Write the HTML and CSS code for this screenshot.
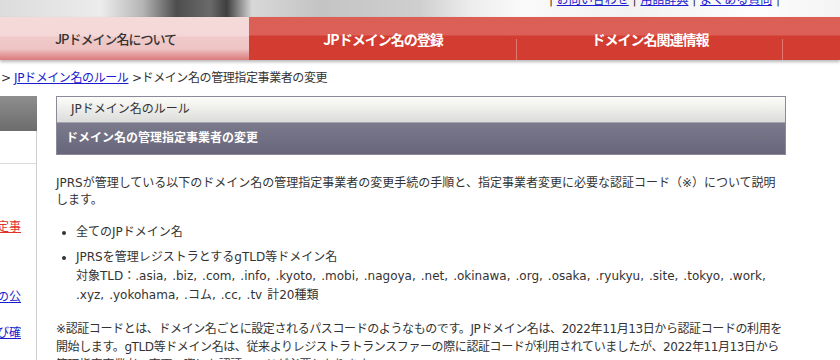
FILE: index.html
```html
<!DOCTYPE html>
<html lang="ja">
<head>
    <meta charset="utf-8">
    <title>ドメイン名の管理指定事業者の変更</title>
    <link rel="stylesheet" href="styles.css">
</head>
<body>
    <div class="header">
        <div class="util-links">
            | <a href="#">お問い合わせ</a> | <a href="#">用語辞典</a> | <a href="#">よくある質問</a> |
        </div>
    </div>

    <ul class="gnav">
        <li class="gnav-item current">JPドメイン名について</li>
        <li class="gnav-item">JPドメイン名の登録</li>
        <li class="gnav-item">ドメイン名関連情報</li>
        <li class="gnav-rest"></li>
    </ul>

    <div class="breadcrumb">&gt; <a href="#">JPドメイン名のルール</a> &gt;ドメイン名の管理指定事業者の変更</div>

    <div class="wrap">
        <div class="side">
            <div class="side-head"></div>
            <div class="side-body">
                <div class="side-top"></div>
                <ul class="side-menu">
                    <li class="active"><a href="#">定事</a></li>
                    <li><a href="#">の公</a></li>
                    <li><a href="#">び確</a></li>
                </ul>
            </div>
        </div>

        <div class="main">
            <div class="page-title">
                <div class="title-sub">JPドメイン名のルール</div>
                <h1 class="title-main">ドメイン名の管理指定事業者の変更</h1>
            </div>

            <p class="lead">JPRSが管理している以下のドメイン名の管理指定事業者の変更手続の手順と、指定事業者変更に必要な認証コード（※）について説明します。</p>

            <ul class="tld-list">
                <li>全てのJPドメイン名</li>
                <li>JPRSを管理レジストラとするgTLD等ドメイン名<br>
                    <span class="tld-names">対象TLD：.asia, .biz, .com, .info, .kyoto, .mobi, .nagoya, .net, .okinawa, .org, .osaka, .ryukyu, .site, .tokyo, .work,<br>
                    .xyz, .yokohama, .コム, .cc, .tv 計20種類</span></li>
            </ul>

            <p class="note">※認証コードとは、ドメイン名ごとに設定されるパスコードのようなものです。JPドメイン名は、2022年11月13日から認証コードの利用を<br>
                開始します。gTLD等ドメイン名は、従来よりレジストラトランスファーの際に認証コードが利用されていましたが、2022年11月13日から<br>
                管理指定事業者の変更の際にも認証コードが必要となります。</p>
        </div>
    </div>
</body>
</html>
```

FILE: styles.css
```css
* {
    margin: 0;
    padding: 0;
    box-sizing: border-box;
}

html, body {
    width: 100%;
    height: 100%;
    overflow: hidden;
}

body {
    font-family: "DejaVu Sans", "Noto Sans CJK JP", sans-serif;
    font-size: 12px;
    line-height: 18px;
    color: #333;
    background: #fff;
}

a {
    color: #1a1ad0;
}

/* header strip */
.header {
    height: 17px;
    overflow: hidden;
    background: linear-gradient(to right, #dcdcdc 0, #ececec 12%, #b5b5b5 17%, #4e4e4e 21%, #6a6a6a 25%, #3f3f3f 27%, #d8d8d8 30%, #c4c4c4 38%, #cfcfcf 50%, #ededed 56%, #fafafa 62%, #f2f2f2 75%, #fdfdfd 90%, #f4f4f4 100%);
}

.util-links {
    margin-top: -7px;
    padding-right: 60px;
    text-align: right;
    line-height: 14px;
    color: #333;
}

/* global nav */
.gnav {
    display: flex;
    list-style: none;
    height: 43px;
    background: linear-gradient(#dc5f56 0, #dc6058 18px, #d33c30 19px, #d33c30 100%);
    box-shadow: 0 2px 3px rgba(0, 0, 0, 0.28);
}

.gnav-item {
    position: relative;
    display: flex;
    align-items: center;
    justify-content: center;
    width: 268px;
    color: #fff;
    font-family: "Noto Sans CJK JP", sans-serif;
    font-size: 14px;
    font-weight: bold;
    letter-spacing: -1px;
    padding-top: 1px;
}

.gnav-item::after {
    content: "";
    position: absolute;
    right: 0;
    bottom: 0;
    width: 1px;
    height: 21px;
    background: #e2776d;
}

.gnav-item:nth-child(3) {
    width: 266px;
}

.gnav-item.current {
    width: 249px;
    padding-right: 18px;
    color: #333;
    font-size: 13px;
    font-weight: 500;
    background: linear-gradient(#f5dada 0, #f4d7d7 19px, #f0caca 20px, #eec3c3 32px, #e49a9a 38px, #db7c7c 100%);
}

.gnav-item.current::after {
    display: none;
}

.gnav-rest {
    flex: 1;
}

/* breadcrumb */
.breadcrumb {
    padding: 9px 0 9px 1px;
    color: #333;
    letter-spacing: -0.4px;
}

/* layout */
.wrap {
    display: flex;
    align-items: flex-start;
}

.side {
    width: 37px;
    flex-shrink: 0;
    margin-right: 19px;
    min-height: 300px;
}

.side-head {
    height: 35px;
    background: linear-gradient(#8e8e8e, #6c6c6c);
}

.side-body {
    border-right: 1px solid #cfcfcf;
    min-height: 265px;
}

.side-top {
    height: 33px;
    border-bottom: 1px solid #dcdcdc;
}

.side-menu {
    list-style: none;
    padding-top: 54px;
    overflow: hidden;
    white-space: nowrap;
}

.side-menu li {
    margin-left: -3px;
    margin-bottom: 52px;
}

.side-menu li + li {
    margin-bottom: 18px;
}

.side-menu li.active a {
    color: #e0302a;
}

/* main */
.main {
    width: 730px;
    flex-shrink: 0;
}

.page-title {
    border: 1px solid #8b8a9a;
}

.title-sub {
    height: 26px;
    padding-left: 14px;
    line-height: 25px;
    color: #333;
    background: linear-gradient(#fcfcf9, #dcdcda);
    border-bottom: 1px solid #a4a3b0;
}

.title-main {
    height: 31px;
    padding-left: 9px;
    line-height: 31px;
    font-size: 12px;
    font-weight: bold;
    color: #fff;
    background: linear-gradient(#7b7a8d, #68667a);
}

.lead {
    margin-top: 20px;
    line-height: 17px;
}

.tld-list {
    margin-top: 14px;
    padding-left: 20px;
}

.tld-list li + li {
    margin-top: 7px;
    line-height: 19px;
}

.tld-names {
    white-space: nowrap;
    word-spacing: 1.2px;
}

.note {
    margin-top: 15px;
    white-space: nowrap;
    letter-spacing: -0.4px;
}
```
